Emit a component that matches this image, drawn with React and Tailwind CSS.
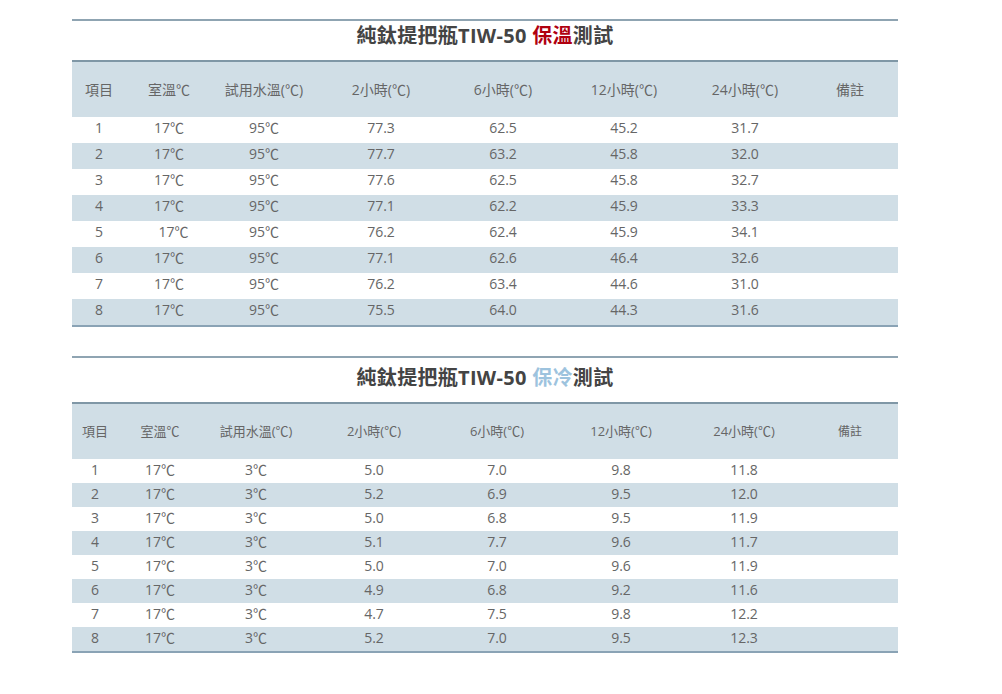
const heatRows = [
  ['1', '17℃', '95℃', '77.3', '62.5', '45.2', '31.7'],
  ['2', '17℃', '95℃', '77.7', '63.2', '45.8', '32.0'],
  ['3', '17℃', '95℃', '77.6', '62.5', '45.8', '32.7'],
  ['4', '17℃', '95℃', '77.1', '62.2', '45.9', '33.3'],
  ['5', ' 17℃', '95℃', '76.2', '62.4', '45.9', '34.1'],
  ['6', '17℃', '95℃', '77.1', '62.6', '46.4', '32.6'],
  ['7', '17℃', '95℃', '76.2', '63.4', '44.6', '31.0'],
  ['8', '17℃', '95℃', '75.5', '64.0', '44.3', '31.6'],
];

const coldRows = [
  ['1', '17℃', '3℃', '5.0', '7.0', '9.8', '11.8'],
  ['2', '17℃', '3℃', '5.2', '6.9', '9.5', '12.0'],
  ['3', '17℃', '3℃', '5.0', '6.8', '9.5', '11.9'],
  ['4', '17℃', '3℃', '5.1', '7.7', '9.6', '11.7'],
  ['5', '17℃', '3℃', '5.0', '7.0', '9.6', '11.9'],
  ['6', '17℃', '3℃', '4.9', '6.8', '9.2', '11.6'],
  ['7', '17℃', '3℃', '4.7', '7.5', '9.8', '12.2'],
  ['8', '17℃', '3℃', '5.2', '7.0', '9.5', '12.3'],
];

const headers = ['項目', '室溫℃', '試用水溫(℃)', '2小時(℃)', '6小時(℃)', '12小時(℃)', '24小時(℃)', '備註'];

const font = { fontFamily: '"Open Sans", "Noto Sans CJK TC", sans-serif' };
const cjk = { fontFamily: '"Noto Sans CJK TC", sans-serif' };

// the degree sign in the picture is the full-width CJK glyph
const Deg = ({ text }) => {
  const parts = text.split('℃');
  return parts.map((p, i) => (
    <span key={i}>
      {p}
      {i < parts.length - 1 && <span style={cjk}>℃</span>}
    </span>
  ));
};

const TestTable = ({ kind, accent, rows, cols, titleBox, rowH, headSize, rowPad }) => (
  <section className="w-[826px]">
    <div className={`border-t-2 border-[#8fa4b2] flex justify-center ${titleBox}`}>
      <h2 className="text-[20px] font-bold text-[#444] tracking-[0.3px]">
        純鈦提把瓶TIW-50 <span className={accent}>{kind}</span>測試
      </h2>
    </div>
    <div className={`grid ${cols} h-[57px] items-center bg-[#d0dee6] border-t-2 border-[#7f97a6] ${headSize} text-[#666]`}>
      {headers.map((h, i) => (
        <div key={h} className={`text-center ${i === 7 && kind === '保冷' ? 'text-[12px]' : ''}`}>
          <Deg text={h} />
        </div>
      ))}
    </div>
    {rows.map((r, ri) => (
      <div
        key={ri}
        className={`grid ${cols} ${rowH} ${rowPad} items-center text-[14px] text-[#666] ${ri % 2 ? 'bg-[#d0dee6]' : 'bg-white'}`}
      >
        {r.map((c, ci) => (
          <div key={ci} className={`text-center ${c.startsWith(' ') ? 'pl-[9px]' : ''}`}>
            <Deg text={c.trim()} />
          </div>
        ))}
        <div />
      </div>
    ))}
    <div className="h-[2px] bg-[#8aa3b5]" />
  </section>
);

export default function App() {
  return (
    <div className="w-[1002px] h-[694px] bg-white pl-[72px] pt-[19px]" style={font}>
      <TestTable
        kind="保溫"
        accent="text-[#b0000f]"
        rows={heatRows}
        cols="grid-cols-[54px_86px_104px_130px_114px_128px_114px_96px]"
        titleBox="h-[41px]"
        rowH="h-[26px]"
        headSize="text-[14px]"
        rowPad="pb-[7px]"
      />
      <div className="h-[29px]" />
      <TestTable
        kind="保冷"
        accent="text-[#9dc3de]"
        rows={coldRows}
        cols="grid-cols-[46px_84px_108px_128px_118px_130px_116px_96px]"
        titleBox="h-[46px] pt-[5px]"
        rowH="h-[24px]"
        headSize="text-[13px]"
        rowPad="pb-[3px]"
      />
    </div>
  );
}
